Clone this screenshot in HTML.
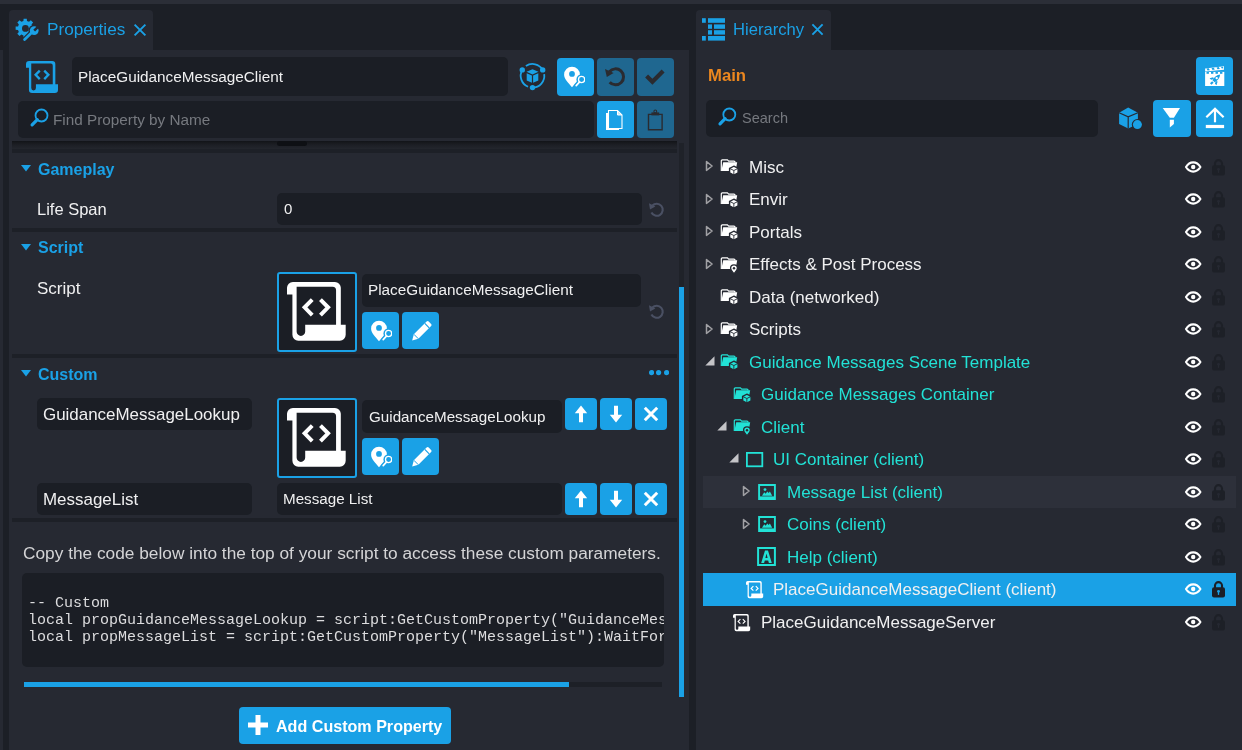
<!DOCTYPE html><html><head><meta charset="utf-8"><style>
html,body{margin:0;padding:0;}
body{width:1242px;height:750px;overflow:hidden;position:relative;background:#1c1f26;font-family:"Liberation Sans",sans-serif;}
body>div,body>svg{position:absolute;}
.t{white-space:pre;will-change:transform;}
</style></head><body><div style="left:0px;top:0px;width:1242px;height:4px;background:#2b2e37;border-radius:0px;"></div><div style="left:0px;top:50px;width:3.2px;height:700px;background:#262932;border-radius:0px;"></div><div style="left:9px;top:10px;width:144px;height:45px;background:#262932;border-radius:4px;"></div><div style="left:9px;top:50px;width:680px;height:700px;background:#262932;border-radius:0px;"></div><svg style="left:12px;top:15px;" width="30" height="30" viewBox="0 0 30 30"><path d="M11.42 6.02 L11.61 3.63 L14.79 3.63 L14.98 6.02 L17.02 6.86 L18.84 5.31 L21.09 7.56 L19.54 9.38 L20.38 11.42 L22.77 11.61 L22.77 14.79 L20.38 14.98 L19.54 17.02 L21.09 18.84 L18.84 21.09 L17.02 19.54 L14.98 20.38 L14.79 22.77 L11.61 22.77 L11.42 20.38 L9.38 19.54 L7.56 21.09 L5.31 18.84 L6.86 17.02 L6.02 14.98 L3.63 14.79 L3.63 11.61 L6.02 11.42 L6.86 9.38 L5.31 7.56 L7.56 5.31 L9.38 6.86Z" fill="#1aa1e6"/><circle cx="13.4" cy="13.4" r="3.4" fill="#262932"/><path d="M12.6 24.6L21.8 15.6" stroke="#262932" stroke-width="5.2"/><circle cx="22.2" cy="15.6" r="5.8" fill="#262932"/><path d="M12.6 24.6L21.8 15.6" stroke="#1aa1e6" stroke-width="2.8" stroke-linecap="round"/><circle cx="22.2" cy="15.6" r="4.4" fill="#1aa1e6"/><path d="M22.2 15.6L27 10.8" stroke="#262932" stroke-width="2.6"/></svg><div class="t" style="left:46.8px;top:21.34px;font-size:17.2px;line-height:17.2px;color:#1aa1e6;font-weight:400;font-family:'Liberation Sans',sans-serif;">Properties</div><svg style="left:133px;top:23px;" width="14" height="14" viewBox="0 0 14 14"><path d="M1.6 1.6L12.4 12.4M12.4 1.6L1.6 12.4" stroke="#1aa1e6" stroke-width="1.9"/></svg><svg style="left:24.6px;top:59.8px" width="34" height="34" viewBox="-1 -1 34 34"><path d="M3.20 0 H26.14 A3.20 3.20 0 0 1 29.34 3.20 V23.26 H32.00 V28.80 A3.20 3.20 0 0 1 28.80 32.00 H6.14 A3.20 3.20 0 0 1 2.94 28.80 V6.75 H0 V3.20 A3.20 3.20 0 0 1 3.20 0Z" fill="#1aa1e6"/><path d="M5.25 2.62 H24.83 A1.92 1.92 0 0 1 26.75 4.54 V23.26 H9.92 V27.04 A2.34 2.34 0 0 1 7.58 29.38 A2.34 2.34 0 0 1 5.25 27.04Z" fill="#262932"/><path d="M13.76 9.60 L9.60 13.82 L13.76 18.08 M18.24 9.60 L22.40 13.82 L18.24 18.08" fill="none" stroke="#1aa1e6" stroke-width="2.30"/></svg><div style="left:72px;top:57px;width:436px;height:39px;background:#1b1e25;border-radius:5px;"></div><div class="t" style="left:78px;top:69.05px;font-size:15.3px;line-height:15.3px;color:#f0f0f1;font-weight:400;font-family:'Liberation Sans',sans-serif;">PlaceGuidanceMessageClient</div><svg style="left:518px;top:62px;" width="30" height="30" viewBox="0 0 30 30"><path d="M7.90 4.02A11.8 11.8 0 0 1 24.72 7.90M26.19 12.16A11.8 11.8 0 0 1 14.50 25.60M10.08 24.74A11.8 11.8 0 0 1 4.28 7.90" fill="none" stroke="#1aa1e6" stroke-width="1.8"/><circle cx="4.28" cy="7.90" r="2.7" fill="#1aa1e6"/><circle cx="24.72" cy="7.90" r="2.7" fill="#1aa1e6"/><circle cx="14.50" cy="25.60" r="2.7" fill="#1aa1e6"/><path d="M14.5 7.2l6 2.6-6 2.6-6-2.6z" fill="#1aa1e6"/><path d="M8.7 11.2l5.2 2.3v7.2l-5.2-2.3z" fill="#1aa1e6"/><path d="M20.3 11.2l-5.2 2.3v7.2l5.2-2.3z" fill="#1aa1e6"/></svg><div style="left:557px;top:58px;width:37px;height:38px;background:#1aa1e6;border-radius:4px;"></div><svg style="left:563px;top:66px;" width="22" height="23" viewBox="0 0 22 23"><path d="M9 21.2C5 16.2 1.1 12.8 1.1 8.7a7.9 7.9 0 0 1 15.8 0c0 4.1-3.9 7.5-7.9 12.5z" fill="#fff"/><circle cx="9" cy="7.9" r="2.9" fill="#1aa1e6"/><circle cx="18.6" cy="13.5" r="5.2" fill="#1aa1e6"/><path d="M15.6 16.9L12.6 20.2" stroke="#1aa1e6" stroke-width="3.6"/><circle cx="18.6" cy="13.5" r="3.1" fill="none" stroke="#fff" stroke-width="1.3"/><path d="M16.4 16.1L13.2 19.6" stroke="#fff" stroke-width="1.7" stroke-linecap="round"/></svg><div style="left:597px;top:58px;width:37px;height:38px;background:#1f6790;border-radius:4px;"></div><svg style="left:597px;top:58px;" width="37" height="38" viewBox="0 0 37 38"><path d="M12.4 13.7A8 8 0 1 1 12.65 24.3" fill="none" stroke="#2a2b30" stroke-width="3"/><path d="M8.0 11.0L9.8 19.0L16.6 15.0z" fill="#2a2b30"/></svg><div style="left:637px;top:58px;width:37px;height:38px;background:#1f6790;border-radius:4px;"></div><svg style="left:637px;top:58px;" width="37" height="38" viewBox="0 0 37 38"><path d="M9.6 18L15.4 23.7L26.1 13" fill="none" stroke="#2a2b30" stroke-width="4.2"/></svg><div style="left:18px;top:101px;width:576px;height:37px;background:#1b1e25;border-radius:5px;"></div><svg style="left:29px;top:108px;" width="22" height="22" viewBox="0 0 22 22"><circle cx="12.5" cy="7.5" r="6" fill="none" stroke="#1aa1e6" stroke-width="1.8"/><path d="M8.3 11.7L3.1 16.9" stroke="#1aa1e6" stroke-width="3.2" stroke-linecap="round"/></svg><div class="t" style="left:53px;top:112.05px;font-size:15.3px;line-height:15.3px;color:#76797f;font-weight:400;font-family:'Liberation Sans',sans-serif;">Find Property by Name</div><div style="left:597px;top:101px;width:37px;height:37px;background:#1aa1e6;border-radius:4px;"></div><svg style="left:597px;top:101px;" width="37" height="37" viewBox="0 0 37 37"><path d="M9 12h13v17H9z" fill="#fff"/><path d="M11.5 9.5h9l4.5 4.5v13.5h-13.5z" fill="#1aa1e6" stroke="#fff" stroke-width="1.1"/><path d="M20.5 9.5v4.5h4.5z" fill="#cfeaf8" stroke="#fff" stroke-width="1"/></svg><div style="left:637px;top:101px;width:37px;height:37px;background:#1f6790;border-radius:4px;"></div><svg style="left:637px;top:101px;" width="37" height="37" viewBox="0 0 37 37"><path d="M11.5 13.4h13.6v15.3H11.5z" fill="none" stroke="#2a2b30" stroke-width="1.4"/><path d="M14.4 11.4h7.8v3h-7.8z" fill="#2a2b30"/><circle cx="18.3" cy="10.4" r="1.4" fill="none" stroke="#2a2b30" stroke-width="1.1"/></svg><div style="left:12px;top:141px;width:665px;height:8px;background:linear-gradient(#121418 0%,#1c1e24 45%,#23262d 100%);border-radius:0px;"></div><div style="left:277px;top:141px;width:30px;height:4.5px;background:#0e1014;border-radius:3px;filter:blur(0.6px);"></div><div style="left:12px;top:149px;width:665px;height:4px;background:#1d2027;border-radius:0px;"></div><div style="left:679px;top:143px;width:5px;height:554px;background:#1f2229;border-radius:0px;"></div><div style="left:679px;top:287px;width:5px;height:410px;background:#1aa1e6;border-radius:0px;"></div><svg style="left:21px;top:165px;" width="10" height="7" viewBox="0 0 10 7"><path d="M0 0h10L5 6.4z" fill="#1aa1e6"/></svg><div class="t" style="left:38px;top:162.26px;font-size:16px;line-height:16px;color:#1aa1e6;font-weight:700;font-family:'Liberation Sans',sans-serif;">Gameplay</div><div class="t" style="left:37.4px;top:201.03px;font-size:16.5px;line-height:16.5px;color:#f0f0f1;font-weight:400;font-family:'Liberation Sans',sans-serif;">Life Span</div><div style="left:277px;top:192.5px;width:364.5px;height:32.5px;background:#1b1e25;border-radius:5px;"></div><div class="t" style="left:284px;top:200.60px;font-size:15px;line-height:15px;color:#f0f0f1;font-weight:400;font-family:'Liberation Sans',sans-serif;">0</div><svg style="left:648px;top:201px;" width="17" height="17" viewBox="0 0 17 17"><path d="M4.4 4.6A6 6 0 1 1 3.4 11.6" fill="none" stroke="#4a5063" stroke-width="2.1"/><path d="M1.0 2.2L2.0 8.4L7.4 5.6z" fill="#4a5063"/></svg><div style="left:12px;top:228px;width:665px;height:4px;background:#1d2027;border-radius:0px;"></div><svg style="left:21px;top:244px;" width="10" height="7" viewBox="0 0 10 7"><path d="M0 0h10L5 6.4z" fill="#1aa1e6"/></svg><div class="t" style="left:38.4px;top:240.26px;font-size:16px;line-height:16px;color:#1aa1e6;font-weight:700;font-family:'Liberation Sans',sans-serif;">Script</div><div class="t" style="left:37.4px;top:279.61px;font-size:17px;line-height:17px;color:#f0f0f1;font-weight:400;font-family:'Liberation Sans',sans-serif;">Script</div><div style="left:277px;top:272px;width:80px;height:80px;background:#1b1e25;border-radius:3px;box-sizing:border-box;border:2px solid #1aa1e6;"></div><svg style="left:286.1px;top:281.1px" width="60.7" height="60.7" viewBox="-1 -1 60.7 60.7"><path d="M5.87 0 H47.96 A5.87 5.87 0 0 1 53.83 5.87 V42.67 H58.70 V52.83 A5.87 5.87 0 0 1 52.83 58.70 H11.27 A5.87 5.87 0 0 1 5.40 52.83 V12.39 H0 V5.87 A5.87 5.87 0 0 1 5.87 0Z" fill="#fff"/><path d="M9.63 4.81 H45.55 A3.52 3.52 0 0 1 49.07 8.34 V42.67 H18.20 V49.60 A4.29 4.29 0 0 1 13.91 53.89 A4.29 4.29 0 0 1 9.63 49.60Z" fill="#1b1e25"/><path d="M25.24 17.61 L17.61 25.36 L25.24 33.17 M33.46 17.61 L41.09 25.36 L33.46 33.17" fill="none" stroke="#fff" stroke-width="3.99"/></svg><div style="left:362px;top:274px;width:279px;height:33px;background:#1b1e25;border-radius:5px;"></div><div class="t" style="left:368px;top:282.05px;font-size:15.3px;line-height:15.3px;color:#f0f0f1;font-weight:400;font-family:'Liberation Sans',sans-serif;">PlaceGuidanceMessageClient</div><div style="left:362px;top:312px;width:37px;height:37px;background:#1aa1e6;border-radius:4px;"></div><svg style="left:370px;top:320px;" width="22" height="23" viewBox="0 0 22 23"><path d="M9 21.2C5 16.2 1.1 12.8 1.1 8.7a7.9 7.9 0 0 1 15.8 0c0 4.1-3.9 7.5-7.9 12.5z" fill="#fff"/><circle cx="9" cy="7.9" r="2.9" fill="#1aa1e6"/><circle cx="18.6" cy="13.5" r="5.2" fill="#1aa1e6"/><path d="M15.6 16.9L12.6 20.2" stroke="#1aa1e6" stroke-width="3.6"/><circle cx="18.6" cy="13.5" r="3.1" fill="none" stroke="#fff" stroke-width="1.3"/><path d="M16.4 16.1L13.2 19.6" stroke="#fff" stroke-width="1.7" stroke-linecap="round"/></svg><div style="left:402px;top:312px;width:37px;height:37px;background:#1aa1e6;border-radius:4px;"></div><svg style="left:410px;top:320px;" width="23" height="23" viewBox="0 0 23 23"><path d="M16.6 1.6a1.5 1.5 0 0 1 2.1 0l2.4 2.4a1.5 1.5 0 0 1 0 2.1L8.4 18.8 2.2 20.4 3.8 14.2z" fill="#fff"/><path d="M14.8 3.4l4.4 4.4" stroke="#1aa1e6" stroke-width="1.2"/><path d="M3.8 14.2l4.6 4.6" stroke="#1aa1e6" stroke-width="1"/></svg><svg style="left:648px;top:303px;" width="17" height="17" viewBox="0 0 17 17"><path d="M4.4 4.6A6 6 0 1 1 3.4 11.6" fill="none" stroke="#4a5063" stroke-width="2.1"/><path d="M1.0 2.2L2.0 8.4L7.4 5.6z" fill="#4a5063"/></svg><div style="left:12px;top:354px;width:665px;height:4px;background:#1d2027;border-radius:0px;"></div><svg style="left:21px;top:370px;" width="10" height="7" viewBox="0 0 10 7"><path d="M0 0h10L5 6.4z" fill="#1aa1e6"/></svg><div class="t" style="left:38.3px;top:367.26px;font-size:16px;line-height:16px;color:#1aa1e6;font-weight:700;font-family:'Liberation Sans',sans-serif;">Custom</div><svg style="left:648.9px;top:370.4px;" width="5.2" height="5.2" viewBox="0 0 5.2 5.2"><circle cx="2.6" cy="2.6" r="2.6" fill="#1aa1e6"/></svg><svg style="left:656.4px;top:370.4px;" width="5.2" height="5.2" viewBox="0 0 5.2 5.2"><circle cx="2.6" cy="2.6" r="2.6" fill="#1aa1e6"/></svg><svg style="left:663.9px;top:370.4px;" width="5.2" height="5.2" viewBox="0 0 5.2 5.2"><circle cx="2.6" cy="2.6" r="2.6" fill="#1aa1e6"/></svg><div style="left:37px;top:398px;width:215px;height:32px;background:#1b1e25;border-radius:5px;"></div><div class="t" style="left:42.7px;top:406.75px;font-size:16.95px;line-height:16.95px;color:#f0f0f1;font-weight:400;font-family:'Liberation Sans',sans-serif;">GuidanceMessageLookup</div><div style="left:277px;top:398px;width:80px;height:80px;background:#1b1e25;border-radius:3px;box-sizing:border-box;border:2px solid #1aa1e6;"></div><svg style="left:286.1px;top:407.1px" width="60.7" height="60.7" viewBox="-1 -1 60.7 60.7"><path d="M5.87 0 H47.96 A5.87 5.87 0 0 1 53.83 5.87 V42.67 H58.70 V52.83 A5.87 5.87 0 0 1 52.83 58.70 H11.27 A5.87 5.87 0 0 1 5.40 52.83 V12.39 H0 V5.87 A5.87 5.87 0 0 1 5.87 0Z" fill="#fff"/><path d="M9.63 4.81 H45.55 A3.52 3.52 0 0 1 49.07 8.34 V42.67 H18.20 V49.60 A4.29 4.29 0 0 1 13.91 53.89 A4.29 4.29 0 0 1 9.63 49.60Z" fill="#1b1e25"/><path d="M25.24 17.61 L17.61 25.36 L25.24 33.17 M33.46 17.61 L41.09 25.36 L33.46 33.17" fill="none" stroke="#fff" stroke-width="3.99"/></svg><div style="left:362px;top:400px;width:200px;height:33px;background:#1b1e25;border-radius:5px;"></div><div class="t" style="left:368.5px;top:409.13px;font-size:15.2px;line-height:15.2px;color:#f0f0f1;font-weight:400;font-family:'Liberation Sans',sans-serif;">GuidanceMessageLookup</div><div style="left:565px;top:398px;width:32px;height:32px;background:#1aa1e6;border-radius:4px;"></div><svg style="left:565px;top:398px;" width="32" height="32" viewBox="0 0 32 32"><path d="M16 7.5L9.8 15.2h4.2v9h4v-9h4.2z" fill="#fff"/></svg><div style="left:600px;top:398px;width:32px;height:32px;background:#1aa1e6;border-radius:4px;"></div><svg style="left:600px;top:398px;" width="32" height="32" viewBox="0 0 32 32"><path d="M16 24.5L9.8 16.8h4.2v-9h4v9h4.2z" fill="#fff"/></svg><div style="left:635px;top:398px;width:32px;height:32px;background:#1aa1e6;border-radius:4px;"></div><svg style="left:635px;top:398px;" width="32" height="32" viewBox="0 0 32 32"><path d="M9.8 9.8L22.2 22.2M22.2 9.8L9.8 22.2" stroke="#fff" stroke-width="3"/></svg><div style="left:362px;top:438px;width:37px;height:37px;background:#1aa1e6;border-radius:4px;"></div><svg style="left:370px;top:446px;" width="22" height="23" viewBox="0 0 22 23"><path d="M9 21.2C5 16.2 1.1 12.8 1.1 8.7a7.9 7.9 0 0 1 15.8 0c0 4.1-3.9 7.5-7.9 12.5z" fill="#fff"/><circle cx="9" cy="7.9" r="2.9" fill="#1aa1e6"/><circle cx="18.6" cy="13.5" r="5.2" fill="#1aa1e6"/><path d="M15.6 16.9L12.6 20.2" stroke="#1aa1e6" stroke-width="3.6"/><circle cx="18.6" cy="13.5" r="3.1" fill="none" stroke="#fff" stroke-width="1.3"/><path d="M16.4 16.1L13.2 19.6" stroke="#fff" stroke-width="1.7" stroke-linecap="round"/></svg><div style="left:402px;top:438px;width:37px;height:37px;background:#1aa1e6;border-radius:4px;"></div><svg style="left:410px;top:446px;" width="23" height="23" viewBox="0 0 23 23"><path d="M16.6 1.6a1.5 1.5 0 0 1 2.1 0l2.4 2.4a1.5 1.5 0 0 1 0 2.1L8.4 18.8 2.2 20.4 3.8 14.2z" fill="#fff"/><path d="M14.8 3.4l4.4 4.4" stroke="#1aa1e6" stroke-width="1.2"/><path d="M3.8 14.2l4.6 4.6" stroke="#1aa1e6" stroke-width="1"/></svg><div style="left:37px;top:483px;width:215px;height:32px;background:#1b1e25;border-radius:5px;"></div><div class="t" style="left:42.7px;top:492.15px;font-size:16.95px;line-height:16.95px;color:#f0f0f1;font-weight:400;font-family:'Liberation Sans',sans-serif;">MessageList</div><div style="left:277px;top:483px;width:285px;height:32px;background:#1b1e25;border-radius:5px;"></div><div class="t" style="left:283.3px;top:490.63px;font-size:15.2px;line-height:15.2px;color:#f0f0f1;font-weight:400;font-family:'Liberation Sans',sans-serif;">Message List</div><div style="left:565px;top:483px;width:32px;height:32px;background:#1aa1e6;border-radius:4px;"></div><svg style="left:565px;top:483px;" width="32" height="32" viewBox="0 0 32 32"><path d="M16 7.5L9.8 15.2h4.2v9h4v-9h4.2z" fill="#fff"/></svg><div style="left:600px;top:483px;width:32px;height:32px;background:#1aa1e6;border-radius:4px;"></div><svg style="left:600px;top:483px;" width="32" height="32" viewBox="0 0 32 32"><path d="M16 24.5L9.8 16.8h4.2v-9h4v9h4.2z" fill="#fff"/></svg><div style="left:635px;top:483px;width:32px;height:32px;background:#1aa1e6;border-radius:4px;"></div><svg style="left:635px;top:483px;" width="32" height="32" viewBox="0 0 32 32"><path d="M9.8 9.8L22.2 22.2M22.2 9.8L9.8 22.2" stroke="#fff" stroke-width="3"/></svg><div style="left:12px;top:518px;width:665px;height:4px;background:#1d2027;border-radius:0px;"></div><div class="t" style="left:22.5px;top:545.36px;font-size:17.3px;line-height:17.3px;color:#d4d4d6;font-weight:400;font-family:'Liberation Sans',sans-serif;">Copy the code below into the top of your script to access these custom parameters.</div><div style="left:22px;top:572.5px;width:641.5px;height:94px;background:#1b1e25;border-radius:5px;"></div><div class="t" style="left:27.8px;top:596.1px;width:635.5px;overflow:hidden;font-family:'Liberation Mono',monospace;font-size:15px;line-height:16.8px;color:#dcdcde;">-- Custom
local propGuidanceMessageLookup = script:GetCustomProperty("GuidanceMessageLookup")
local propMessageList = script:GetCustomProperty("MessageList"):WaitForObject()</div><div style="left:24px;top:682px;width:638px;height:5px;background:#1d2027;border-radius:0px;"></div><div style="left:24px;top:682px;width:545px;height:5px;background:#1aa1e6;border-radius:0px;"></div><div style="left:239px;top:707px;width:212px;height:37px;background:#1aa1e6;border-radius:4px;"></div><svg style="left:248px;top:715px;" width="20" height="20" viewBox="0 0 20 20"><path d="M10 0v20M0 10h20" stroke="#fff" stroke-width="5"/></svg><div class="t" style="left:276.4px;top:718.17px;font-size:16.1px;line-height:16.1px;color:#fff;font-weight:700;font-family:'Liberation Sans',sans-serif;">Add Custom Property</div><div style="left:696px;top:10px;width:135px;height:45px;background:#262932;border-radius:4px;"></div><div style="left:696px;top:50px;width:546px;height:700px;background:#262932;border-radius:0px;"></div><svg style="left:698px;top:14px;" width="30" height="30" viewBox="0 0 30 30"><g fill="#1aa1e6"><rect x="4" y="4.2" width="3.8" height="4.6"/><rect x="10" y="4.2" width="17" height="4.6"/><rect x="10" y="10.4" width="4" height="4.4"/><rect x="16" y="10.4" width="11" height="4.4"/><rect x="10" y="16.2" width="4" height="4.4"/><rect x="16" y="16.2" width="11" height="4.4"/><rect x="4" y="22" width="3.8" height="4.6"/><rect x="10" y="22" width="17" height="4.6"/></g></svg><div class="t" style="left:732.8px;top:21.75px;font-size:16.6px;line-height:16.6px;color:#1aa1e6;font-weight:400;font-family:'Liberation Sans',sans-serif;">Hierarchy</div><svg style="left:811px;top:23px;" width="13" height="13" viewBox="0 0 13 13"><path d="M1.4 1.4L11.6 11.6M11.6 1.4L1.4 11.6" stroke="#1aa1e6" stroke-width="1.9"/></svg><div class="t" style="left:707.7px;top:67.86px;font-size:16.7px;line-height:16.7px;color:#ec871f;font-weight:700;font-family:'Liberation Sans',sans-serif;">Main</div><div style="left:1196px;top:57px;width:37px;height:38px;background:#1aa1e6;border-radius:4px;"></div><svg style="left:1195px;top:55px;" width="40" height="40" viewBox="0 0 40 40"><path d="M10.1 13.5L29 11.2V14.7L10.1 16.4z" fill="#fff"/><g fill="#1aa1e6"><path d="M11.5 13.6l2.3-.3 1 1.9-2.3.3zM16.5 13l2.3-.3 1 1.9-2.3.3zM21.5 12.4l2.3-.3 1 1.9-2.3.3zM26 11.9l1.8-.2.8 1.6-1.8.2z"/></g><rect x="10.1" y="16.9" width="19.2" height="14.1" fill="#fff"/><g fill="#1aa1e6"><rect x="11.5" y="17" width="2.4" height="1.8"/><rect x="16" y="17" width="2.4" height="1.8"/><rect x="20.5" y="17" width="2.4" height="1.8"/><rect x="25" y="17" width="2.4" height="1.8"/><path d="M25.2 19.6C24.9 22.9 22.9 25.6 19.6 27.3L17.5 25.2C19.2 21.9 21.9 19.9 25.2 19.6z"/><path d="M18.2 22.2L14.6 23.3 16.1 24.8 18.9 24.1zM22.6 26.6L21.5 30.2 20 28.7 20.7 25.9z"/><path d="M17.1 26.2L15 28.3 16.5 29.8 18.6 27.7z"/></g><circle cx="21.7" cy="23.1" r="1.2" fill="#fff"/></svg><div style="left:706px;top:100px;width:392px;height:37px;background:#1b1e25;border-radius:5px;"></div><svg style="left:714px;top:106px;" width="24" height="24" viewBox="0 0 24 24"><circle cx="15.3" cy="8.5" r="6" fill="none" stroke="#1aa1e6" stroke-width="1.8"/><path d="M11.1 12.7L6 17.9" stroke="#1aa1e6" stroke-width="3.2" stroke-linecap="round"/></svg><div class="t" style="left:741.6px;top:110.73px;font-size:14.5px;line-height:14.5px;color:#76797f;font-weight:400;font-family:'Liberation Sans',sans-serif;">Search</div><svg style="left:1112px;top:98px;" width="34" height="36" viewBox="0 0 34 36"><path d="M16.2 9.6L25.9 14.7V25.9L16.2 30.4L7.1 25.9V14.7z" fill="#1aa1e6"/><path d="M7.1 14.7L16.2 18.8L25.9 14.7M16.2 18.8V30.4" stroke="#262932" stroke-width="1.2" fill="none"/><circle cx="25.4" cy="26.6" r="5.6" fill="#262932"/><circle cx="25.4" cy="26.6" r="4.5" fill="#1aa1e6"/></svg><div style="left:1153px;top:100px;width:38px;height:37px;background:#1aa1e6;border-radius:4px;"></div><svg style="left:1153px;top:100px;" width="38" height="37" viewBox="0 0 38 37"><path d="M9.7 8.1H27L20.9 17.8H16.8z" fill="#fff"/><path d="M16.8 19.8H20.9V24L16.8 27.4z" fill="#fff"/></svg><div style="left:1196px;top:100px;width:37px;height:37px;background:#1aa1e6;border-radius:4px;"></div><svg style="left:1196px;top:100px;" width="37" height="37" viewBox="0 0 37 37"><path d="M10.3 17.3L19 8.9L27.6 17.3" fill="none" stroke="#fff" stroke-width="2.2"/><path d="M19 9.5V22.3" stroke="#fff" stroke-width="2.2"/><rect x="9.8" y="24.9" width="18.3" height="3.2" fill="#fff"/></svg><svg style="left:704.8px;top:160.0px;" width="10" height="12" viewBox="0 0 10 12"><path d="M1.5 1.6L7.1 6 1.5 10.4z" fill="none" stroke="#a0a0a4" stroke-width="1.5" stroke-linejoin="round"/></svg><svg style="left:720.3px;top:158.0px;" width="20" height="19" viewBox="0 0 20 19"><path d="M1.3 13V2.9a1 1 0 0 1 1-1H7.4l1.3 1.3H14a1 1 0 0 1 1 1V4.6" fill="none" stroke="#fff" stroke-width="1.2"/><path d="M3.2 4.2H17.2L15.6 13H1.3z" fill="#fff"/><path d="M13.85 8.2L18.1 10.4V15L13.85 17.1L9.6 15V10.4z" fill="#fff" stroke="#262932" stroke-width="1.4"/><path d="M9.6 10.4L13.85 12.5L18.1 10.4M13.85 12.5V17.1" stroke="#262932" stroke-width="0.9" fill="none"/></svg><div class="t" style="left:748.7px;top:158.91px;font-size:17px;line-height:17px;color:#f0f0f1;font-weight:400;font-family:'Liberation Sans',sans-serif;">Misc</div><svg style="left:1183px;top:158.9px;" width="20" height="16" viewBox="0 0 20 16"><path d="M3 8C5 4.7 7.4 3.4 10.2 3.4S15.4 4.7 17.4 8C15.4 11.3 13 12.6 10.2 12.6S5 11.3 3 8z" fill="none" stroke="#fff" stroke-width="2.15" stroke-linejoin="round"/><circle cx="10.2" cy="8" r="2.2" fill="#fff"/></svg><svg style="left:1210px;top:156.5px;" width="17" height="20" viewBox="0 0 17 20"><path d="M5 9V6.6a3.5 3.5 0 0 1 7 0V9" fill="none" stroke="#1d2027" stroke-width="2.1"/><rect x="2" y="8.2" width="13" height="10.2" rx="2" fill="#1d2027"/><circle cx="8.5" cy="12.3" r="1.4" fill="#262932"/><path d="M8.5 12.3v3.6" stroke="#262932" stroke-width="1.3"/></svg><svg style="left:704.8px;top:192.5px;" width="10" height="12" viewBox="0 0 10 12"><path d="M1.5 1.6L7.1 6 1.5 10.4z" fill="none" stroke="#a0a0a4" stroke-width="1.5" stroke-linejoin="round"/></svg><svg style="left:720.3px;top:190.5px;" width="20" height="19" viewBox="0 0 20 19"><path d="M1.3 13V2.9a1 1 0 0 1 1-1H7.4l1.3 1.3H14a1 1 0 0 1 1 1V4.6" fill="none" stroke="#fff" stroke-width="1.2"/><path d="M3.2 4.2H17.2L15.6 13H1.3z" fill="#fff"/><path d="M13.85 8.2L18.1 10.4V15L13.85 17.1L9.6 15V10.4z" fill="#fff" stroke="#262932" stroke-width="1.4"/><path d="M9.6 10.4L13.85 12.5L18.1 10.4M13.85 12.5V17.1" stroke="#262932" stroke-width="0.9" fill="none"/></svg><div class="t" style="left:748.7px;top:191.41px;font-size:17px;line-height:17px;color:#f0f0f1;font-weight:400;font-family:'Liberation Sans',sans-serif;">Envir</div><svg style="left:1183px;top:191.4px;" width="20" height="16" viewBox="0 0 20 16"><path d="M3 8C5 4.7 7.4 3.4 10.2 3.4S15.4 4.7 17.4 8C15.4 11.3 13 12.6 10.2 12.6S5 11.3 3 8z" fill="none" stroke="#fff" stroke-width="2.15" stroke-linejoin="round"/><circle cx="10.2" cy="8" r="2.2" fill="#fff"/></svg><svg style="left:1210px;top:189.0px;" width="17" height="20" viewBox="0 0 17 20"><path d="M5 9V6.6a3.5 3.5 0 0 1 7 0V9" fill="none" stroke="#1d2027" stroke-width="2.1"/><rect x="2" y="8.2" width="13" height="10.2" rx="2" fill="#1d2027"/><circle cx="8.5" cy="12.3" r="1.4" fill="#262932"/><path d="M8.5 12.3v3.6" stroke="#262932" stroke-width="1.3"/></svg><svg style="left:704.8px;top:225.0px;" width="10" height="12" viewBox="0 0 10 12"><path d="M1.5 1.6L7.1 6 1.5 10.4z" fill="none" stroke="#a0a0a4" stroke-width="1.5" stroke-linejoin="round"/></svg><svg style="left:720.3px;top:223.0px;" width="20" height="19" viewBox="0 0 20 19"><path d="M1.3 13V2.9a1 1 0 0 1 1-1H7.4l1.3 1.3H14a1 1 0 0 1 1 1V4.6" fill="none" stroke="#fff" stroke-width="1.2"/><path d="M3.2 4.2H17.2L15.6 13H1.3z" fill="#fff"/><path d="M13.85 8.2L18.1 10.4V15L13.85 17.1L9.6 15V10.4z" fill="#fff" stroke="#262932" stroke-width="1.4"/><path d="M9.6 10.4L13.85 12.5L18.1 10.4M13.85 12.5V17.1" stroke="#262932" stroke-width="0.9" fill="none"/></svg><div class="t" style="left:748.7px;top:223.91px;font-size:17px;line-height:17px;color:#f0f0f1;font-weight:400;font-family:'Liberation Sans',sans-serif;">Portals</div><svg style="left:1183px;top:223.9px;" width="20" height="16" viewBox="0 0 20 16"><path d="M3 8C5 4.7 7.4 3.4 10.2 3.4S15.4 4.7 17.4 8C15.4 11.3 13 12.6 10.2 12.6S5 11.3 3 8z" fill="none" stroke="#fff" stroke-width="2.15" stroke-linejoin="round"/><circle cx="10.2" cy="8" r="2.2" fill="#fff"/></svg><svg style="left:1210px;top:221.5px;" width="17" height="20" viewBox="0 0 17 20"><path d="M5 9V6.6a3.5 3.5 0 0 1 7 0V9" fill="none" stroke="#1d2027" stroke-width="2.1"/><rect x="2" y="8.2" width="13" height="10.2" rx="2" fill="#1d2027"/><circle cx="8.5" cy="12.3" r="1.4" fill="#262932"/><path d="M8.5 12.3v3.6" stroke="#262932" stroke-width="1.3"/></svg><svg style="left:704.8px;top:257.5px;" width="10" height="12" viewBox="0 0 10 12"><path d="M1.5 1.6L7.1 6 1.5 10.4z" fill="none" stroke="#a0a0a4" stroke-width="1.5" stroke-linejoin="round"/></svg><svg style="left:720.3px;top:255.5px;" width="20" height="19" viewBox="0 0 20 19"><path d="M1.3 13V2.9a1 1 0 0 1 1-1H7.4l1.3 1.3H14a1 1 0 0 1 1 1V4.6" fill="none" stroke="#fff" stroke-width="1.2"/><path d="M3.2 4.2H17.2L15.6 13H1.3z" fill="#fff"/><path d="M14 17.8C12.5 15.8 10.6 14.2 10.6 12.2a3.4 3.4 0 0 1 6.8 0c0 2-1.9 3.6-3.4 5.6z" fill="#fff" stroke="#262932" stroke-width="1.3"/><circle cx="14" cy="12.2" r="1.2" fill="#262932"/></svg><div class="t" style="left:748.7px;top:256.41px;font-size:17px;line-height:17px;color:#f0f0f1;font-weight:400;font-family:'Liberation Sans',sans-serif;">Effects &amp; Post Process</div><svg style="left:1183px;top:256.4px;" width="20" height="16" viewBox="0 0 20 16"><path d="M3 8C5 4.7 7.4 3.4 10.2 3.4S15.4 4.7 17.4 8C15.4 11.3 13 12.6 10.2 12.6S5 11.3 3 8z" fill="none" stroke="#fff" stroke-width="2.15" stroke-linejoin="round"/><circle cx="10.2" cy="8" r="2.2" fill="#fff"/></svg><svg style="left:1210px;top:254.0px;" width="17" height="20" viewBox="0 0 17 20"><path d="M5 9V6.6a3.5 3.5 0 0 1 7 0V9" fill="none" stroke="#1d2027" stroke-width="2.1"/><rect x="2" y="8.2" width="13" height="10.2" rx="2" fill="#1d2027"/><circle cx="8.5" cy="12.3" r="1.4" fill="#262932"/><path d="M8.5 12.3v3.6" stroke="#262932" stroke-width="1.3"/></svg><svg style="left:720.3px;top:288.0px;" width="20" height="19" viewBox="0 0 20 19"><path d="M1.3 13V2.9a1 1 0 0 1 1-1H7.4l1.3 1.3H14a1 1 0 0 1 1 1V4.6" fill="none" stroke="#fff" stroke-width="1.2"/><path d="M3.2 4.2H17.2L15.6 13H1.3z" fill="#fff"/><path d="M13.85 8.2L18.1 10.4V15L13.85 17.1L9.6 15V10.4z" fill="#fff" stroke="#262932" stroke-width="1.4"/><path d="M9.6 10.4L13.85 12.5L18.1 10.4M13.85 12.5V17.1" stroke="#262932" stroke-width="0.9" fill="none"/></svg><div class="t" style="left:748.7px;top:288.91px;font-size:17px;line-height:17px;color:#f0f0f1;font-weight:400;font-family:'Liberation Sans',sans-serif;">Data (networked)</div><svg style="left:1183px;top:288.9px;" width="20" height="16" viewBox="0 0 20 16"><path d="M3 8C5 4.7 7.4 3.4 10.2 3.4S15.4 4.7 17.4 8C15.4 11.3 13 12.6 10.2 12.6S5 11.3 3 8z" fill="none" stroke="#fff" stroke-width="2.15" stroke-linejoin="round"/><circle cx="10.2" cy="8" r="2.2" fill="#fff"/></svg><svg style="left:1210px;top:286.5px;" width="17" height="20" viewBox="0 0 17 20"><path d="M5 9V6.6a3.5 3.5 0 0 1 7 0V9" fill="none" stroke="#1d2027" stroke-width="2.1"/><rect x="2" y="8.2" width="13" height="10.2" rx="2" fill="#1d2027"/><circle cx="8.5" cy="12.3" r="1.4" fill="#262932"/><path d="M8.5 12.3v3.6" stroke="#262932" stroke-width="1.3"/></svg><svg style="left:704.8px;top:322.5px;" width="10" height="12" viewBox="0 0 10 12"><path d="M1.5 1.6L7.1 6 1.5 10.4z" fill="none" stroke="#a0a0a4" stroke-width="1.5" stroke-linejoin="round"/></svg><svg style="left:720.3px;top:320.5px;" width="20" height="19" viewBox="0 0 20 19"><path d="M1.3 13V2.9a1 1 0 0 1 1-1H7.4l1.3 1.3H14a1 1 0 0 1 1 1V4.6" fill="none" stroke="#fff" stroke-width="1.2"/><path d="M3.2 4.2H17.2L15.6 13H1.3z" fill="#fff"/><path d="M13.85 8.2L18.1 10.4V15L13.85 17.1L9.6 15V10.4z" fill="#fff" stroke="#262932" stroke-width="1.4"/><path d="M9.6 10.4L13.85 12.5L18.1 10.4M13.85 12.5V17.1" stroke="#262932" stroke-width="0.9" fill="none"/></svg><div class="t" style="left:748.7px;top:321.41px;font-size:17px;line-height:17px;color:#f0f0f1;font-weight:400;font-family:'Liberation Sans',sans-serif;">Scripts</div><svg style="left:1183px;top:321.4px;" width="20" height="16" viewBox="0 0 20 16"><path d="M3 8C5 4.7 7.4 3.4 10.2 3.4S15.4 4.7 17.4 8C15.4 11.3 13 12.6 10.2 12.6S5 11.3 3 8z" fill="none" stroke="#fff" stroke-width="2.15" stroke-linejoin="round"/><circle cx="10.2" cy="8" r="2.2" fill="#fff"/></svg><svg style="left:1210px;top:319.0px;" width="17" height="20" viewBox="0 0 17 20"><path d="M5 9V6.6a3.5 3.5 0 0 1 7 0V9" fill="none" stroke="#1d2027" stroke-width="2.1"/><rect x="2" y="8.2" width="13" height="10.2" rx="2" fill="#1d2027"/><circle cx="8.5" cy="12.3" r="1.4" fill="#262932"/><path d="M8.5 12.3v3.6" stroke="#262932" stroke-width="1.3"/></svg><svg style="left:704.5px;top:355.5px;" width="10" height="10" viewBox="0 0 10 10"><path d="M9.5 0.3v9.2H0.3z" fill="#c4c4c7"/></svg><svg style="left:720.3px;top:353.0px;" width="20" height="19" viewBox="0 0 20 19"><path d="M1.3 13V2.9a1 1 0 0 1 1-1H7.4l1.3 1.3H14a1 1 0 0 1 1 1V4.6" fill="none" stroke="#22e2d6" stroke-width="1.2"/><path d="M3.2 4.2H17.2L15.6 13H1.3z" fill="#22e2d6"/><path d="M13.85 8.2L18.1 10.4V15L13.85 17.1L9.6 15V10.4z" fill="#22e2d6" stroke="#262932" stroke-width="1.4"/><path d="M9.6 10.4L13.85 12.5L18.1 10.4M13.85 12.5V17.1" stroke="#262932" stroke-width="0.9" fill="none"/></svg><div class="t" style="left:748.7px;top:353.91px;font-size:17px;line-height:17px;color:#22e2d6;font-weight:400;font-family:'Liberation Sans',sans-serif;">Guidance Messages Scene Template</div><svg style="left:1183px;top:353.9px;" width="20" height="16" viewBox="0 0 20 16"><path d="M3 8C5 4.7 7.4 3.4 10.2 3.4S15.4 4.7 17.4 8C15.4 11.3 13 12.6 10.2 12.6S5 11.3 3 8z" fill="none" stroke="#fff" stroke-width="2.15" stroke-linejoin="round"/><circle cx="10.2" cy="8" r="2.2" fill="#fff"/></svg><svg style="left:1210px;top:351.5px;" width="17" height="20" viewBox="0 0 17 20"><path d="M5 9V6.6a3.5 3.5 0 0 1 7 0V9" fill="none" stroke="#1d2027" stroke-width="2.1"/><rect x="2" y="8.2" width="13" height="10.2" rx="2" fill="#1d2027"/><circle cx="8.5" cy="12.3" r="1.4" fill="#262932"/><path d="M8.5 12.3v3.6" stroke="#262932" stroke-width="1.3"/></svg><svg style="left:733px;top:385.5px;" width="20" height="19" viewBox="0 0 20 19"><path d="M1.3 13V2.9a1 1 0 0 1 1-1H7.4l1.3 1.3H14a1 1 0 0 1 1 1V4.6" fill="none" stroke="#22e2d6" stroke-width="1.2"/><path d="M3.2 4.2H17.2L15.6 13H1.3z" fill="#22e2d6"/><path d="M13.85 8.2L18.1 10.4V15L13.85 17.1L9.6 15V10.4z" fill="#22e2d6" stroke="#262932" stroke-width="1.4"/><path d="M9.6 10.4L13.85 12.5L18.1 10.4M13.85 12.5V17.1" stroke="#262932" stroke-width="0.9" fill="none"/></svg><div class="t" style="left:761px;top:386.41px;font-size:17px;line-height:17px;color:#22e2d6;font-weight:400;font-family:'Liberation Sans',sans-serif;">Guidance Messages Container</div><svg style="left:1183px;top:386.4px;" width="20" height="16" viewBox="0 0 20 16"><path d="M3 8C5 4.7 7.4 3.4 10.2 3.4S15.4 4.7 17.4 8C15.4 11.3 13 12.6 10.2 12.6S5 11.3 3 8z" fill="none" stroke="#fff" stroke-width="2.15" stroke-linejoin="round"/><circle cx="10.2" cy="8" r="2.2" fill="#fff"/></svg><svg style="left:1210px;top:384.0px;" width="17" height="20" viewBox="0 0 17 20"><path d="M5 9V6.6a3.5 3.5 0 0 1 7 0V9" fill="none" stroke="#1d2027" stroke-width="2.1"/><rect x="2" y="8.2" width="13" height="10.2" rx="2" fill="#1d2027"/><circle cx="8.5" cy="12.3" r="1.4" fill="#262932"/><path d="M8.5 12.3v3.6" stroke="#262932" stroke-width="1.3"/></svg><svg style="left:717px;top:420.5px;" width="10" height="10" viewBox="0 0 10 10"><path d="M9.5 0.3v9.2H0.3z" fill="#c4c4c7"/></svg><svg style="left:733px;top:418.0px;" width="20" height="19" viewBox="0 0 20 19"><path d="M1.3 13V2.9a1 1 0 0 1 1-1H7.4l1.3 1.3H14a1 1 0 0 1 1 1V4.6" fill="none" stroke="#22e2d6" stroke-width="1.2"/><path d="M3.2 4.2H17.2L15.6 13H1.3z" fill="#22e2d6"/><path d="M14 17.8C12.5 15.8 10.6 14.2 10.6 12.2a3.4 3.4 0 0 1 6.8 0c0 2-1.9 3.6-3.4 5.6z" fill="#22e2d6" stroke="#262932" stroke-width="1.3"/><circle cx="14" cy="12.2" r="1.2" fill="#262932"/></svg><div class="t" style="left:761px;top:418.91px;font-size:17px;line-height:17px;color:#22e2d6;font-weight:400;font-family:'Liberation Sans',sans-serif;">Client</div><svg style="left:1183px;top:418.9px;" width="20" height="16" viewBox="0 0 20 16"><path d="M3 8C5 4.7 7.4 3.4 10.2 3.4S15.4 4.7 17.4 8C15.4 11.3 13 12.6 10.2 12.6S5 11.3 3 8z" fill="none" stroke="#fff" stroke-width="2.15" stroke-linejoin="round"/><circle cx="10.2" cy="8" r="2.2" fill="#fff"/></svg><svg style="left:1210px;top:416.5px;" width="17" height="20" viewBox="0 0 17 20"><path d="M5 9V6.6a3.5 3.5 0 0 1 7 0V9" fill="none" stroke="#1d2027" stroke-width="2.1"/><rect x="2" y="8.2" width="13" height="10.2" rx="2" fill="#1d2027"/><circle cx="8.5" cy="12.3" r="1.4" fill="#262932"/><path d="M8.5 12.3v3.6" stroke="#262932" stroke-width="1.3"/></svg><svg style="left:729.2px;top:453.0px;" width="10" height="10" viewBox="0 0 10 10"><path d="M9.5 0.3v9.2H0.3z" fill="#c4c4c7"/></svg><svg style="left:745.8px;top:452.0px;" width="18" height="16" viewBox="0 0 18 16"><rect x="0.9" y="0.9" width="15.4" height="13.4" fill="none" stroke="#22e2d6" stroke-width="1.8"/></svg><div class="t" style="left:773px;top:451.41px;font-size:17px;line-height:17px;color:#22e2d6;font-weight:400;font-family:'Liberation Sans',sans-serif;">UI Container (client)</div><svg style="left:1183px;top:451.4px;" width="20" height="16" viewBox="0 0 20 16"><path d="M3 8C5 4.7 7.4 3.4 10.2 3.4S15.4 4.7 17.4 8C15.4 11.3 13 12.6 10.2 12.6S5 11.3 3 8z" fill="none" stroke="#fff" stroke-width="2.15" stroke-linejoin="round"/><circle cx="10.2" cy="8" r="2.2" fill="#fff"/></svg><svg style="left:1210px;top:449.0px;" width="17" height="20" viewBox="0 0 17 20"><path d="M5 9V6.6a3.5 3.5 0 0 1 7 0V9" fill="none" stroke="#1d2027" stroke-width="2.1"/><rect x="2" y="8.2" width="13" height="10.2" rx="2" fill="#1d2027"/><circle cx="8.5" cy="12.3" r="1.4" fill="#262932"/><path d="M8.5 12.3v3.6" stroke="#262932" stroke-width="1.3"/></svg><div style="left:703px;top:476px;width:533px;height:32px;background:#2d303a;border-radius:0px;"></div><svg style="left:741.8px;top:485.0px;" width="10" height="12" viewBox="0 0 10 12"><path d="M1.5 1.6L7.1 6 1.5 10.4z" fill="none" stroke="#a0a0a4" stroke-width="1.5" stroke-linejoin="round"/></svg><svg style="left:758px;top:483.5px;" width="18" height="16" viewBox="0 0 18 16"><path d="M1.1 1H16.9V15H1.1z" fill="none" stroke="#22e2d6" stroke-width="1.9"/><rect x="1" y="12.4" width="16" height="2.6" fill="#22e2d6"/><path d="M4 11.8l2.2-3.6 1.5 1.6 1.6-2.4 1.3 1.6 1.3-1.4 2.3 4.2z" fill="#22e2d6"/><circle cx="7" cy="5.6" r="1.4" fill="#22e2d6"/></svg><div class="t" style="left:786.7px;top:483.91px;font-size:17px;line-height:17px;color:#22e2d6;font-weight:400;font-family:'Liberation Sans',sans-serif;">Message List (client)</div><svg style="left:1183px;top:483.9px;" width="20" height="16" viewBox="0 0 20 16"><path d="M3 8C5 4.7 7.4 3.4 10.2 3.4S15.4 4.7 17.4 8C15.4 11.3 13 12.6 10.2 12.6S5 11.3 3 8z" fill="none" stroke="#fff" stroke-width="2.15" stroke-linejoin="round"/><circle cx="10.2" cy="8" r="2.2" fill="#fff"/></svg><svg style="left:1210px;top:481.5px;" width="17" height="20" viewBox="0 0 17 20"><path d="M5 9V6.6a3.5 3.5 0 0 1 7 0V9" fill="none" stroke="#1d2027" stroke-width="2.1"/><rect x="2" y="8.2" width="13" height="10.2" rx="2" fill="#1d2027"/><circle cx="8.5" cy="12.3" r="1.4" fill="#262932"/><path d="M8.5 12.3v3.6" stroke="#262932" stroke-width="1.3"/></svg><svg style="left:741.8px;top:517.5px;" width="10" height="12" viewBox="0 0 10 12"><path d="M1.5 1.6L7.1 6 1.5 10.4z" fill="none" stroke="#a0a0a4" stroke-width="1.5" stroke-linejoin="round"/></svg><svg style="left:758px;top:516.0px;" width="18" height="16" viewBox="0 0 18 16"><path d="M1.1 1H16.9V15H1.1z" fill="none" stroke="#22e2d6" stroke-width="1.9"/><rect x="1" y="12.4" width="16" height="2.6" fill="#22e2d6"/><path d="M4 11.8l2.2-3.6 1.5 1.6 1.6-2.4 1.3 1.6 1.3-1.4 2.3 4.2z" fill="#22e2d6"/><circle cx="7" cy="5.6" r="1.4" fill="#22e2d6"/></svg><div class="t" style="left:786.7px;top:516.41px;font-size:17px;line-height:17px;color:#22e2d6;font-weight:400;font-family:'Liberation Sans',sans-serif;">Coins (client)</div><svg style="left:1183px;top:516.4px;" width="20" height="16" viewBox="0 0 20 16"><path d="M3 8C5 4.7 7.4 3.4 10.2 3.4S15.4 4.7 17.4 8C15.4 11.3 13 12.6 10.2 12.6S5 11.3 3 8z" fill="none" stroke="#fff" stroke-width="2.15" stroke-linejoin="round"/><circle cx="10.2" cy="8" r="2.2" fill="#fff"/></svg><svg style="left:1210px;top:514.0px;" width="17" height="20" viewBox="0 0 17 20"><path d="M5 9V6.6a3.5 3.5 0 0 1 7 0V9" fill="none" stroke="#1d2027" stroke-width="2.1"/><rect x="2" y="8.2" width="13" height="10.2" rx="2" fill="#1d2027"/><circle cx="8.5" cy="12.3" r="1.4" fill="#262932"/><path d="M8.5 12.3v3.6" stroke="#262932" stroke-width="1.3"/></svg><svg style="left:757px;top:547.0px;" width="19" height="19" viewBox="0 0 19 19"><path d="M1.1 1.1H17.9V17.9H1.1z" fill="none" stroke="#22e2d6" stroke-width="2"/><path d="M4.2 16L8 3.4H11L14.8 16H11.9L11.2 13.4H7.8L7.1 16zM8.4 11H10.6L9.5 6.6z" fill="#22e2d6" fill-rule="evenodd"/></svg><div class="t" style="left:786.7px;top:548.91px;font-size:17px;line-height:17px;color:#22e2d6;font-weight:400;font-family:'Liberation Sans',sans-serif;">Help (client)</div><svg style="left:1183px;top:548.9px;" width="20" height="16" viewBox="0 0 20 16"><path d="M3 8C5 4.7 7.4 3.4 10.2 3.4S15.4 4.7 17.4 8C15.4 11.3 13 12.6 10.2 12.6S5 11.3 3 8z" fill="none" stroke="#fff" stroke-width="2.15" stroke-linejoin="round"/><circle cx="10.2" cy="8" r="2.2" fill="#fff"/></svg><svg style="left:1210px;top:546.5px;" width="17" height="20" viewBox="0 0 17 20"><path d="M5 9V6.6a3.5 3.5 0 0 1 7 0V9" fill="none" stroke="#1d2027" stroke-width="2.1"/><rect x="2" y="8.2" width="13" height="10.2" rx="2" fill="#1d2027"/><circle cx="8.5" cy="12.3" r="1.4" fill="#262932"/><path d="M8.5 12.3v3.6" stroke="#262932" stroke-width="1.3"/></svg><div style="left:703px;top:573px;width:533px;height:33px;background:#1aa1e6;border-radius:0px;"></div><svg style="left:744.7px;top:580.2px" width="19.2" height="19.2" viewBox="-1 -1 19.2 19.2"><path d="M1.72 0 H14.05 A1.72 1.72 0 0 1 15.77 1.72 V12.50 H17.20 V15.48 A1.72 1.72 0 0 1 15.48 17.20 H3.30 A1.72 1.72 0 0 1 1.58 15.48 V3.63 H0 V1.72 A1.72 1.72 0 0 1 1.72 0Z" fill="#fff"/><path d="M2.82 1.41 H13.35 A1.03 1.03 0 0 1 14.38 2.44 V12.50 H5.33 V14.53 A1.26 1.26 0 0 1 4.08 15.79 A1.26 1.26 0 0 1 2.82 14.53Z" fill="#1aa1e6"/><path d="M7.40 5.16 L5.16 7.43 L7.40 9.72 M9.80 5.16 L12.04 7.43 L9.80 9.72" fill="none" stroke="#fff" stroke-width="1.17"/></svg><div class="t" style="left:773px;top:581.41px;font-size:17px;line-height:17px;color:#f0f0f1;font-weight:400;font-family:'Liberation Sans',sans-serif;">PlaceGuidanceMessageClient (client)</div><svg style="left:1183px;top:581.4px;" width="20" height="16" viewBox="0 0 20 16"><path d="M3 8C5 4.7 7.4 3.4 10.2 3.4S15.4 4.7 17.4 8C15.4 11.3 13 12.6 10.2 12.6S5 11.3 3 8z" fill="none" stroke="#fff" stroke-width="2.15" stroke-linejoin="round"/><circle cx="10.2" cy="8" r="2.2" fill="#fff"/></svg><svg style="left:1210px;top:579.0px;" width="17" height="20" viewBox="0 0 17 20"><path d="M5 9V6.6a3.5 3.5 0 0 1 7 0V9" fill="none" stroke="#1c1f26" stroke-width="2.1"/><rect x="2" y="8.2" width="13" height="10.2" rx="2" fill="#1c1f26"/><circle cx="8.5" cy="12.3" r="1.4" fill="#1aa1e6"/><path d="M8.5 12.3v3.6" stroke="#1aa1e6" stroke-width="1.3"/></svg><svg style="left:731.8px;top:612.7px" width="19.2" height="19.2" viewBox="-1 -1 19.2 19.2"><path d="M1.72 0 H14.05 A1.72 1.72 0 0 1 15.77 1.72 V12.50 H17.20 V15.48 A1.72 1.72 0 0 1 15.48 17.20 H3.30 A1.72 1.72 0 0 1 1.58 15.48 V3.63 H0 V1.72 A1.72 1.72 0 0 1 1.72 0Z" fill="#fff"/><path d="M2.82 1.41 H13.35 A1.03 1.03 0 0 1 14.38 2.44 V12.50 H5.33 V14.53 A1.26 1.26 0 0 1 4.08 15.79 A1.26 1.26 0 0 1 2.82 14.53Z" fill="#262932"/><path d="M7.40 5.16 L5.16 7.43 L7.40 9.72 M9.80 5.16 L12.04 7.43 L9.80 9.72" fill="none" stroke="#fff" stroke-width="1.17"/></svg><div class="t" style="left:761px;top:613.91px;font-size:17px;line-height:17px;color:#f0f0f1;font-weight:400;font-family:'Liberation Sans',sans-serif;">PlaceGuidanceMessageServer</div><svg style="left:1183px;top:613.9px;" width="20" height="16" viewBox="0 0 20 16"><path d="M3 8C5 4.7 7.4 3.4 10.2 3.4S15.4 4.7 17.4 8C15.4 11.3 13 12.6 10.2 12.6S5 11.3 3 8z" fill="none" stroke="#fff" stroke-width="2.15" stroke-linejoin="round"/><circle cx="10.2" cy="8" r="2.2" fill="#fff"/></svg><svg style="left:1210px;top:611.5px;" width="17" height="20" viewBox="0 0 17 20"><path d="M5 9V6.6a3.5 3.5 0 0 1 7 0V9" fill="none" stroke="#1d2027" stroke-width="2.1"/><rect x="2" y="8.2" width="13" height="10.2" rx="2" fill="#1d2027"/><circle cx="8.5" cy="12.3" r="1.4" fill="#262932"/><path d="M8.5 12.3v3.6" stroke="#262932" stroke-width="1.3"/></svg></body></html>
